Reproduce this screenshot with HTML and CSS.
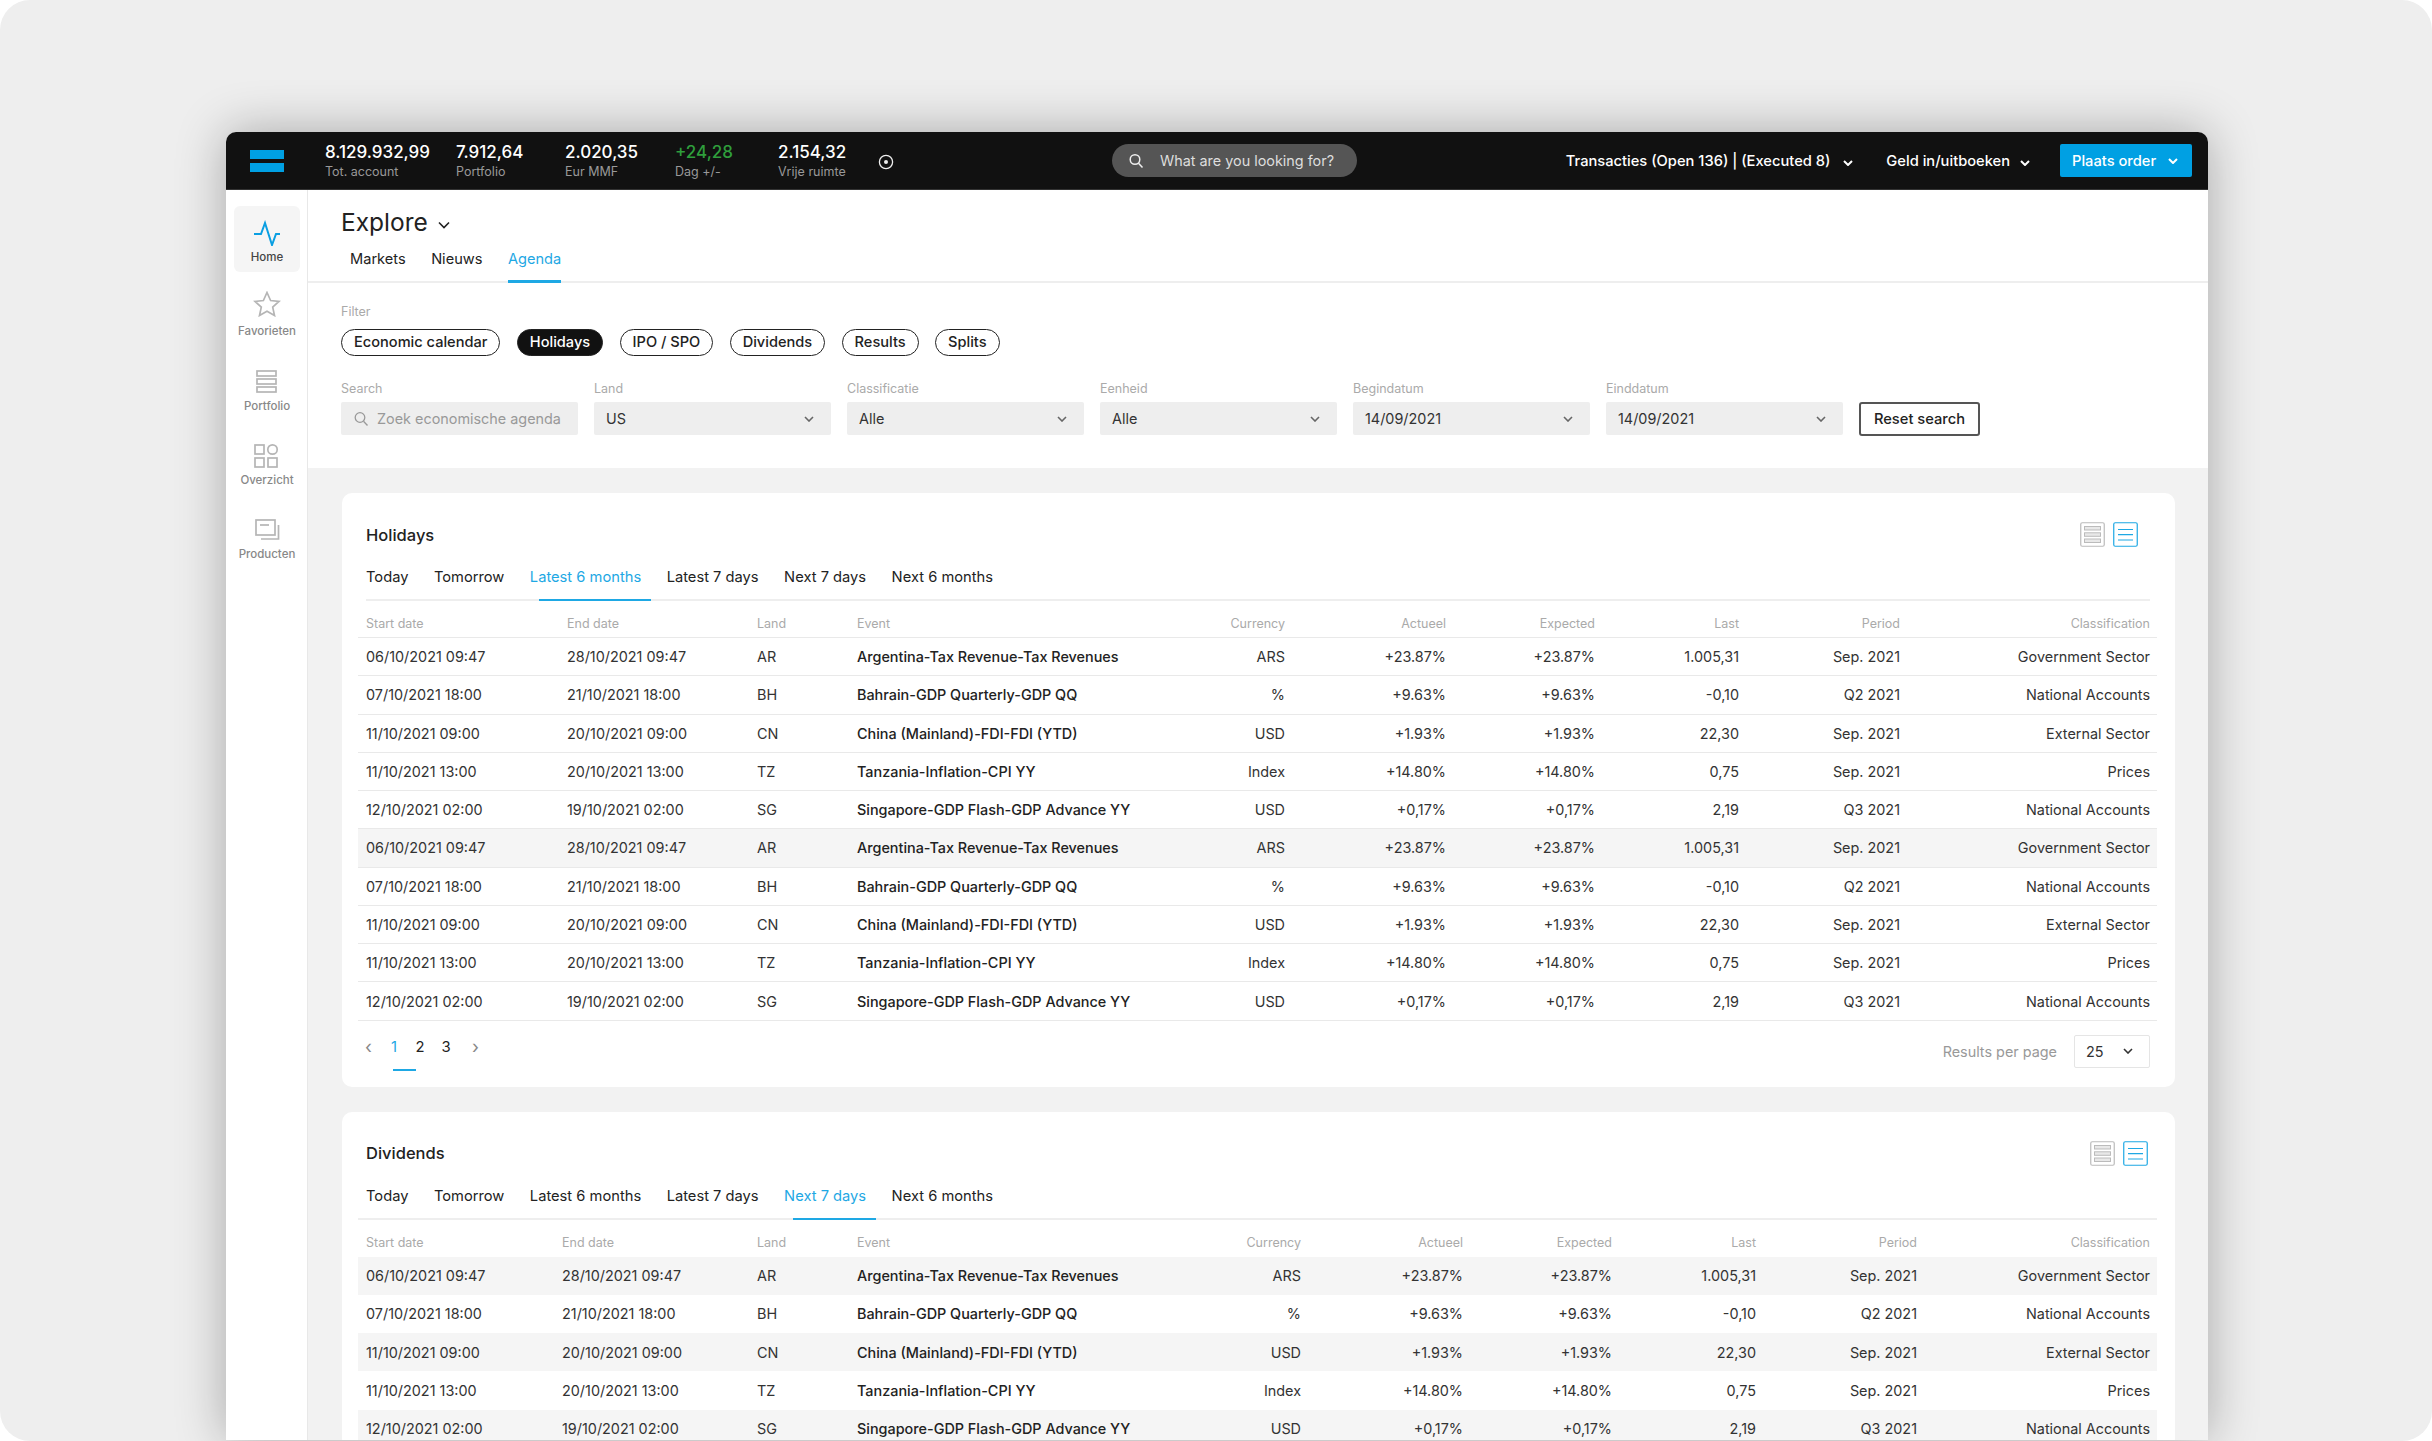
FILE: index.html
```html
<!DOCTYPE html>
<html lang="nl">

<head>
    <meta charset="utf-8">
    <title>Explore | Agenda</title>
    <link rel="stylesheet" href="styles.css">
</head>

<body>
    <div class="stage">
        <div class="window">
            <header class="topbar">
                <div class="logo"><span></span><span></span></div>
                <div class="stats">
                    <div class="stat stat-total"><b>8.129.932,99</b><small>Tot. account</small></div>
                    <div class="stat stat-portfolio"><b>7.912,64</b><small>Portfolio</small></div>
                    <div class="stat stat-mmf"><b>2.020,35</b><small>Eur MMF</small></div>
                    <div class="stat stat-day"><b class="green">+24,28</b><small>Dag +/-</small></div>
                    <div class="stat stat-free"><b>2.154,32</b><small>Vrije ruimte</small></div>
                    <svg class="eye" width="16" height="16" viewBox="0 0 16 16">
                        <circle cx="8" cy="8" r="6.6" fill="none" stroke="#eee" stroke-width="1.3" />
                        <circle cx="8" cy="8" r="2" fill="#eee" />
                    </svg>
                </div>
                <div class="global-search">
                    <svg width="16" height="16" viewBox="0 0 16 16" fill="none" stroke="#eee" stroke-width="1.5">
                        <circle cx="7" cy="6.5" r="4.8" />
                        <path d="M10.5 10.2 14.5 14.5" />
                    </svg>
                    <span>What are you looking for?</span>
                </div>
                <div class="top-actions">
                    <a class="top-link link-transactions">Transacties (Open 136) | (Executed 8) <svg class="chev" width="10" height="6" viewBox="0 0 10 6"><path d="M1 1l4 4 4-4" /></svg></a>
                    <a class="top-link link-funds">Geld in/uitboeken <svg class="chev" width="10" height="6" viewBox="0 0 10 6"><path d="M1 1l4 4 4-4" /></svg></a>
                    <a class="order-btn">Plaats order <svg class="chev" width="10" height="6" viewBox="0 0 10 6"><path d="M1 1l4 4 4-4" /></svg></a>
                </div>
            </header>

            <div class="app">
                <nav class="sidebar">
                    <a class="side-item active">
                        <svg width="28" height="26" viewBox="0 0 28 26" fill="none" stroke="#0a9fe2" stroke-width="2">
                            <path d="M1 14h7l4-11 7 22 4-11h4" />
                        </svg>
                        Home
                    </a>
                    <a class="side-item">
                        <svg class="icon-star" width="28" height="26" viewBox="0 0 28 26" fill="none" stroke="#b5b5b5" stroke-width="1.7">
                            <path d="M14 1.500l3.600 8 8.400.9-6.300 5.700 1.800 8.400-7.500-4.300-7.500 4.300 1.800-8.400-6.300-5.700 8.400-.9z" />
                        </svg>
                        Favorieten
                    </a>
                    <a class="side-item">
                        <svg width="28" height="26" viewBox="0 0 28 26" fill="none" stroke="#b5b5b5" stroke-width="1.7">
                            <rect x="4" y="2" width="19" height="5" />
                            <rect x="4" y="10" width="19" height="5" />
                            <rect x="4" y="18" width="19" height="5" />
                        </svg>
                        Portfolio
                    </a>
                    <a class="side-item">
                        <svg width="28" height="26" viewBox="0 0 28 26" fill="none" stroke="#b5b5b5" stroke-width="1.7">
                            <rect x="2" y="2" width="9" height="9" />
                            <circle cx="19.500" cy="6.500" r="4.700" />
                            <rect x="2" y="15" width="9" height="9" />
                            <rect x="15" y="15" width="9" height="9" />
                        </svg>
                        Overzicht
                    </a>
                    <a class="side-item">
                        <svg class="icon-products" width="28" height="26" viewBox="0 0 28 26" fill="none" stroke="#b5b5b5" stroke-width="1.7">
                            <rect x="3" y="2" width="19" height="15" />
                            <path d="M7 7h9" />
                            <path d="M25.500 7v14H8" />
                        </svg>
                        Producten
                    </a>
                </nav>

                <main class="content">
                    <section class="page-head">
                        <h1>Explore <svg width="12" height="8" viewBox="0 0 12 8" fill="none" stroke="#222" stroke-width="1.600"><path d="M1 1.500l5 5 5-5" /></svg></h1>
                        <div class="page-tabs">
                            <a>Markets</a>
                            <a>Nieuws</a>
                            <a class="active">Agenda</a>
                        </div>
                    </section>

                    <section class="filters">
                        <div class="field-label">Filter</div>
                        <div class="pills">
                            <a class="pill">Economic calendar</a>
                            <a class="pill active">Holidays</a>
                            <a class="pill">IPO / SPO</a>
                            <a class="pill">Dividends</a>
                            <a class="pill">Results</a>
                            <a class="pill">Splits</a>
                        </div>
                        <div class="fields">
                            <div class="field">
                                <div class="field-label">Search</div>
                                <div class="control control-search">
                                    <svg width="16" height="16" viewBox="0 0 16 16" fill="none" stroke="#999" stroke-width="1.300">
                                        <circle cx="7" cy="6.500" r="4.800" />
                                        <path d="M10.500 10.200 14.500 14.500" />
                                    </svg>
                                    Zoek economische agenda
                                </div>
                            </div>
                            <div class="field">
                                <div class="field-label">Land</div>
                                <div class="control">US <svg class="chev" width="10" height="6" viewBox="0 0 10 6"><path d="M1 1l4 4 4-4" /></svg></div>
                            </div>
                            <div class="field">
                                <div class="field-label">Classificatie</div>
                                <div class="control">Alle <svg class="chev" width="10" height="6" viewBox="0 0 10 6"><path d="M1 1l4 4 4-4" /></svg></div>
                            </div>
                            <div class="field">
                                <div class="field-label">Eenheid</div>
                                <div class="control">Alle <svg class="chev" width="10" height="6" viewBox="0 0 10 6"><path d="M1 1l4 4 4-4" /></svg></div>
                            </div>
                            <div class="field">
                                <div class="field-label">Begindatum</div>
                                <div class="control">14/09/2021 <svg class="chev" width="10" height="6" viewBox="0 0 10 6"><path d="M1 1l4 4 4-4" /></svg></div>
                            </div>
                            <div class="field">
                                <div class="field-label">Einddatum</div>
                                <div class="control">14/09/2021 <svg class="chev" width="10" height="6" viewBox="0 0 10 6"><path d="M1 1l4 4 4-4" /></svg></div>
                            </div>
                            <a class="reset-btn">Reset search</a>
                        </div>
                    </section>

                    <section class="cards">
                        <article class="card card-holidays">
                            <div class="card-head">
                                <h2>Holidays</h2>
                                <div class="view-toggle">
                                    <svg width="25" height="25" viewBox="0 0 25 25" fill="none" stroke="#bbb">
                                        <rect x=".75" y=".75" width="23.500" height="23.500" rx="1.500" stroke-width="1.200" />
                                        <rect x="4.500" y="4.500" width="16" height="3.500" fill="#e8e8e8" />
                                        <rect x="4.500" y="10.800" width="16" height="3.500" fill="#e8e8e8" />
                                        <rect x="4.500" y="17" width="16" height="3.500" fill="#e8e8e8" />
                                    </svg>
                                    <svg width="25" height="25" viewBox="0 0 25 25" fill="none" stroke="#1ea8e4">
                                        <rect x=".75" y=".75" width="23.500" height="23.500" rx="1.500" stroke-width="1.200" />
                                        <path d="M5 7.500h15M5 12.700h15M5 18h15" stroke-width="1.200" />
                                    </svg>
                                </div>
                            </div>
                            <div class="range-tabs">
                                <a>Today</a>
                                <a>Tomorrow</a>
                                <a class="active">Latest 6 months</a>
                                <a>Latest 7 days</a>
                                <a>Next 7 days</a>
                                <a>Next 6 months</a>
                            </div>
                            <div class="grid-table">
                                <div class="row row-head">
                                    <span>Start date</span><span>End date</span><span>Land</span><span>Event</span><span class="num">Currency</span><span class="num">Actueel</span><span class="num">Expected</span><span class="num">Last</span><span class="num">Period</span><span class="num">Classification</span>
                                </div>
                                <div class="row">
                                    <span>06/10/2021 09:47</span><span>28/10/2021 09:47</span><span>AR</span><span class="event">Argentina-Tax Revenue-Tax Revenues</span><span class="num">ARS</span><span class="num">+23.87%</span><span class="num">+23.87%</span><span class="num">1.005,31</span><span class="num">Sep. 2021</span><span class="num">Government Sector</span>
                                </div>
                                <div class="row">
                                    <span>07/10/2021 18:00</span><span>21/10/2021 18:00</span><span>BH</span><span class="event">Bahrain-GDP Quarterly-GDP QQ</span><span class="num">%</span><span class="num">+9.63%</span><span class="num">+9.63%</span><span class="num">-0,10</span><span class="num">Q2 2021</span><span class="num">National Accounts</span>
                                </div>
                                <div class="row">
                                    <span>11/10/2021 09:00</span><span>20/10/2021 09:00</span><span>CN</span><span class="event">China (Mainland)-FDI-FDI (YTD)</span><span class="num">USD</span><span class="num">+1.93%</span><span class="num">+1.93%</span><span class="num">22,30</span><span class="num">Sep. 2021</span><span class="num">External Sector</span>
                                </div>
                                <div class="row">
                                    <span>11/10/2021 13:00</span><span>20/10/2021 13:00</span><span>TZ</span><span class="event">Tanzania-Inflation-CPI YY</span><span class="num">Index</span><span class="num">+14.80%</span><span class="num">+14.80%</span><span class="num">0,75</span><span class="num">Sep. 2021</span><span class="num">Prices</span>
                                </div>
                                <div class="row">
                                    <span>12/10/2021 02:00</span><span>19/10/2021 02:00</span><span>SG</span><span class="event">Singapore-GDP Flash-GDP Advance YY</span><span class="num">USD</span><span class="num">+0,17%</span><span class="num">+0,17%</span><span class="num">2,19</span><span class="num">Q3 2021</span><span class="num">National Accounts</span>
                                </div>
                                <div class="row hover">
                                    <span>06/10/2021 09:47</span><span>28/10/2021 09:47</span><span>AR</span><span class="event">Argentina-Tax Revenue-Tax Revenues</span><span class="num">ARS</span><span class="num">+23.87%</span><span class="num">+23.87%</span><span class="num">1.005,31</span><span class="num">Sep. 2021</span><span class="num">Government Sector</span>
                                </div>
                                <div class="row">
                                    <span>07/10/2021 18:00</span><span>21/10/2021 18:00</span><span>BH</span><span class="event">Bahrain-GDP Quarterly-GDP QQ</span><span class="num">%</span><span class="num">+9.63%</span><span class="num">+9.63%</span><span class="num">-0,10</span><span class="num">Q2 2021</span><span class="num">National Accounts</span>
                                </div>
                                <div class="row">
                                    <span>11/10/2021 09:00</span><span>20/10/2021 09:00</span><span>CN</span><span class="event">China (Mainland)-FDI-FDI (YTD)</span><span class="num">USD</span><span class="num">+1.93%</span><span class="num">+1.93%</span><span class="num">22,30</span><span class="num">Sep. 2021</span><span class="num">External Sector</span>
                                </div>
                                <div class="row">
                                    <span>11/10/2021 13:00</span><span>20/10/2021 13:00</span><span>TZ</span><span class="event">Tanzania-Inflation-CPI YY</span><span class="num">Index</span><span class="num">+14.80%</span><span class="num">+14.80%</span><span class="num">0,75</span><span class="num">Sep. 2021</span><span class="num">Prices</span>
                                </div>
                                <div class="row">
                                    <span>12/10/2021 02:00</span><span>19/10/2021 02:00</span><span>SG</span><span class="event">Singapore-GDP Flash-GDP Advance YY</span><span class="num">USD</span><span class="num">+0,17%</span><span class="num">+0,17%</span><span class="num">2,19</span><span class="num">Q3 2021</span><span class="num">National Accounts</span>
                                </div>
                            </div>
                            <div class="card-foot">
                                <div class="pager">
                                    <a class="pager-arrow">&#8249;</a>
                                    <a class="active">1</a>
                                    <a>2</a>
                                    <a>3</a>
                                    <a class="pager-arrow pager-next">&#8250;</a>
                                </div>
                                <div class="per-page">
                                    Results per page
                                    <div class="per-select">25 <svg class="chev" width="10" height="6" viewBox="0 0 10 6"><path d="M1 1l4 4 4-4" /></svg></div>
                                </div>
                            </div>
                        </article>

                        <article class="card card-dividends">
                            <div class="card-head">
                                <h2>Dividends</h2>
                                <div class="view-toggle">
                                    <svg width="25" height="25" viewBox="0 0 25 25" fill="none" stroke="#bbb">
                                        <rect x=".75" y=".75" width="23.500" height="23.500" rx="1.500" stroke-width="1.200" />
                                        <rect x="4.500" y="4.500" width="16" height="3.500" fill="#e8e8e8" />
                                        <rect x="4.500" y="10.800" width="16" height="3.500" fill="#e8e8e8" />
                                        <rect x="4.500" y="17" width="16" height="3.500" fill="#e8e8e8" />
                                    </svg>
                                    <svg width="25" height="25" viewBox="0 0 25 25" fill="none" stroke="#1ea8e4">
                                        <rect x=".75" y=".75" width="23.500" height="23.500" rx="1.500" stroke-width="1.200" />
                                        <path d="M5 7.500h15M5 12.700h15M5 18h15" stroke-width="1.200" />
                                    </svg>
                                </div>
                            </div>
                            <div class="range-tabs">
                                <a>Today</a>
                                <a>Tomorrow</a>
                                <a>Latest 6 months</a>
                                <a>Latest 7 days</a>
                                <a class="active">Next 7 days</a>
                                <a>Next 6 months</a>
                            </div>
                            <div class="grid-table">
                                <div class="row row-head">
                                    <span>Start date</span><span>End date</span><span>Land</span><span>Event</span><span class="num">Currency</span><span class="num">Actueel</span><span class="num">Expected</span><span class="num">Last</span><span class="num">Period</span><span class="num">Classification</span>
                                </div>
                                <div class="row">
                                    <span>06/10/2021 09:47</span><span>28/10/2021 09:47</span><span>AR</span><span class="event">Argentina-Tax Revenue-Tax Revenues</span><span class="num">ARS</span><span class="num">+23.87%</span><span class="num">+23.87%</span><span class="num">1.005,31</span><span class="num">Sep. 2021</span><span class="num">Government Sector</span>
                                </div>
                                <div class="row">
                                    <span>07/10/2021 18:00</span><span>21/10/2021 18:00</span><span>BH</span><span class="event">Bahrain-GDP Quarterly-GDP QQ</span><span class="num">%</span><span class="num">+9.63%</span><span class="num">+9.63%</span><span class="num">-0,10</span><span class="num">Q2 2021</span><span class="num">National Accounts</span>
                                </div>
                                <div class="row">
                                    <span>11/10/2021 09:00</span><span>20/10/2021 09:00</span><span>CN</span><span class="event">China (Mainland)-FDI-FDI (YTD)</span><span class="num">USD</span><span class="num">+1.93%</span><span class="num">+1.93%</span><span class="num">22,30</span><span class="num">Sep. 2021</span><span class="num">External Sector</span>
                                </div>
                                <div class="row">
                                    <span>11/10/2021 13:00</span><span>20/10/2021 13:00</span><span>TZ</span><span class="event">Tanzania-Inflation-CPI YY</span><span class="num">Index</span><span class="num">+14.80%</span><span class="num">+14.80%</span><span class="num">0,75</span><span class="num">Sep. 2021</span><span class="num">Prices</span>
                                </div>
                                <div class="row">
                                    <span>12/10/2021 02:00</span><span>19/10/2021 02:00</span><span>SG</span><span class="event">Singapore-GDP Flash-GDP Advance YY</span><span class="num">USD</span><span class="num">+0,17%</span><span class="num">+0,17%</span><span class="num">2,19</span><span class="num">Q3 2021</span><span class="num">National Accounts</span>
                                </div>
                            </div>
                        </article>
                    </section>
                </main>
            </div>
        </div>
    </div>
</body>
</html>
```

FILE: styles.css
```css
html,
body {
    padding: 0;
    margin: 0;
    background-color: #fff;
}

* {
    box-sizing: border-box;
}

body {
    font-family: Inter, "Liberation Sans", sans-serif;
    font-size: 14.4px;
    color: #222;
}

.stage {
    height: 1441px;
    padding: 132px 0 0 226px;
    background-color: #eee;
    border-radius: 30px;
    overflow: hidden;
}

.window {
    width: 1982px;
    height: 1308px;
    border-radius: 10px 10px 0 0;
    overflow: hidden;
    background-color: #fff;
    box-shadow: 0 0 50px rgba(0, 0, 0, .3);
}

.chev {
    fill: none;
    stroke: currentColor;
    stroke-width: 1.6;
}

/* top bar */
.topbar {
    height: 58px;
    display: flex;
    align-items: center;
    padding: 0 16px 0 24px;
    border-bottom: 1px solid #333;
    background-color: #111;
    color: #fff;
}

.topbar .chev {
    stroke-width: 2;
}

.logo {
    width: 34px;
}

.logo span {
    display: block;
    height: 9px;
    background-color: #00a0e3;
}

.logo span + span {
    margin-top: 4px;
}

.stats {
    display: flex;
    align-items: center;
    margin-left: 41px;
}

.stat b {
    display: block;
    font-size: 17px;
    line-height: 20px;
    font-weight: 500;
}

.stat small {
    display: block;
    font-size: 12.5px;
    line-height: 15px;
    color: #999;
    margin-top: 2px;
}

.stat .green {
    color: #2f9e3c;
}

.stat-total { width: 131px; }
.stat-portfolio { width: 109px; }
.stat-mmf { width: 110px; }
.stat-day { width: 103px; }
.stat-free { width: 100px; }

.eye {
    margin-top: 2px;
}

.global-search {
    width: 245px;
    height: 33px;
    margin-left: 218px;
    display: flex;
    align-items: center;
    gap: 16px;
    padding-left: 16px;
    border-radius: 17px;
    background-color: #555;
    color: #ddd;
}

.top-actions {
    margin-left: auto;
    display: flex;
    align-items: center;
    font-size: 14.7px;
    font-weight: 500;
}

.top-link {
    white-space: nowrap;
}

.link-transactions {
    margin-right: 33px;
}

.link-transactions .chev {
    margin-left: 9px;
}

.link-funds {
    margin-right: 30px;
}

.link-funds .chev {
    margin-left: 6px;
}

.order-btn {
    width: 132px;
    height: 33px;
    display: flex;
    align-items: center;
    justify-content: space-between;
    padding: 0 14px 0 12px;
    border-radius: 2px;
    background-color: #00a0e3;
}

/* side navigation */
.app {
    display: flex;
    height: 1250px;
}

.sidebar {
    flex: none;
    width: 82px;
    padding: 16px 7px 0 8px;
    border-right: 1px solid #e8e8e8;
}

.side-item {
    height: 66px;
    margin-bottom: 8.25px;
    display: flex;
    flex-direction: column;
    align-items: center;
    gap: 4px;
    padding-top: 14px;
    border-radius: 6px;
    font-size: 11.5px;
    line-height: 14px;
    font-weight: 500;
    color: #888;
}

.side-item.active {
    background-color: #f5f5f5;
    color: #444;
}

.icon-star {
    margin: -3px 0 3px;
}

.icon-products {
    margin: 1px 0 -1px;
}

/* page header */
.content {
    flex: 1;
    background-color: #f2f2f2;
}

.page-head {
    padding-top: 17px;
    background-color: #fff;
    border-bottom: 2px solid #eee;
}

.page-head h1 {
    margin: 0 0 0 33px;
    font-size: 24.5px;
    line-height: 30px;
    font-weight: 400;
}

.page-head h1 svg {
    margin-left: 3px;
    vertical-align: 2px;
}

.page-tabs {
    display: flex;
    gap: 25.5px;
    margin: 9px 0 -2px 42px;
    font-size: 14.6px;
}

.page-tabs a {
    height: 37px;
    padding-top: 3px;
    line-height: 20px;
}

.page-tabs a.active {
    color: #1ea8e4;
    border-bottom: 3px solid #1ea8e4;
}

/* filters */
.filters {
    padding: 21px 0 33px 33px;
    background-color: #fff;
}

.field-label {
    font-size: 12.5px;
    line-height: 16px;
    color: #aaa;
}

.pills {
    display: flex;
    gap: 16.4px;
    margin: 9px 0 25px;
}

.pill {
    height: 27px;
    padding: 0 12px;
    border: 1.5px solid #222;
    border-radius: 14px;
    font-size: 14.6px;
    line-height: 24px;
    font-weight: 500;
}

.pill.active {
    background-color: #111;
    color: #fff;
}

.fields {
    display: flex;
    align-items: flex-end;
    gap: 16px;
}

.field {
    width: 237px;
}

.control {
    height: 33px;
    margin-top: 5px;
    display: flex;
    align-items: center;
    justify-content: space-between;
    padding: 0 17px 0 12px;
    border-radius: 2px;
    background-color: #eee;
    color: #333;
}

.control .chev {
    color: #666;
}

.control-search {
    justify-content: flex-start;
    gap: 8px;
    padding-right: 0;
    white-space: nowrap;
    color: #999;
}

.reset-btn {
    width: 121px;
    height: 34px;
    margin-bottom: -1px;
    border: 2px solid #555;
    border-radius: 3px;
    font-size: 14.7px;
    font-weight: 500;
    line-height: 30px;
    text-align: center;
}

/* cards */
.cards {
    display: flex;
    flex-direction: column;
    gap: 25px;
    padding: 25px 33px 0 34px;
}

.card {
    padding: 0 18px 0 16px;
    border-radius: 10px;
    background-color: #fff;
}

.card-holidays {
    height: 594px;
}

.card-head {
    display: flex;
    justify-content: space-between;
    align-items: center;
    padding: 29px 19px 0 8px;
}

.card-head h2 {
    margin: 0;
    font-size: 16.5px;
    font-weight: 500;
}

.view-toggle {
    display: flex;
    gap: 8px;
}

.view-toggle svg {
    display: block;
}

.range-tabs {
    display: flex;
    gap: 25.5px;
    height: 54px;
    margin: 0 7px 0 8px;
    padding-top: 20px;
    border-bottom: 2px solid #eee;
    font-size: 14.7px;
}

.range-tabs a {
    position: relative;
    line-height: 20px;
}

.range-tabs a.active {
    color: #1ea8e4;
}

.range-tabs a.active::after {
    content: "";
    position: absolute;
    left: 9px;
    right: -10px;
    top: 32px;
    height: 2px;
    background-color: #1ea8e4;
}

.row {
    display: grid;
    align-items: center;
    height: 38.27px;
    padding: 0 7px 0 8px;
    border-bottom: 1.5px solid #e9e9e9;
    color: #333;
}

.card-holidays .row {
    grid-template-columns: 201px 190px 100px 328px 100px 161px 149px 144px 161px 250px;
}

.card-dividends .row {
    grid-template-columns: 196px 195px 100px 344px 100px 162px 149px 144px 161px 233px;
}

.row-head {
    height: 37px;
    padding-top: 9px;
    font-size: 12.5px;
    color: #aaa;
}

.row .num {
    text-align: right;
}

.row .event {
    color: #222;
    font-weight: 500;
}

.row.hover {
    background-color: #f5f5f5;
}

.card-dividends .card-head {
    padding: 28.5px 9px 0 8px;
}

.card-dividends .range-tabs {
    margin: 0;
    padding-left: 8px;
}

.card-dividends .row {
    border-bottom: 0;
}

.card-dividends .row:nth-child(even) {
    background-color: #f5f5f5;
}

/* pagination */
.card-foot {
    display: flex;
    justify-content: space-between;
    padding: 14px 7px 0 0;
}

.pager {
    display: flex;
    margin-left: -2px;
    font-size: 14.8px;
    line-height: 24px;
}

.pager a {
    position: relative;
    width: 26px;
    text-align: center;
}

.pager a.active {
    color: #1ea8e4;
}

.pager a.active::after {
    content: "";
    position: absolute;
    left: 12px;
    top: 34px;
    width: 23px;
    height: 2px;
    background-color: #1ea8e4;
}

.pager .pager-arrow {
    width: 25px;
    color: #888;
    font-size: 18px;
}

.pager .pager-next {
    margin-left: 4px;
}

.per-page {
    display: flex;
    align-items: center;
    gap: 17px;
    color: #999;
}

.per-select {
    width: 76px;
    height: 33px;
    display: flex;
    align-items: center;
    justify-content: space-between;
    padding: 0 16px 0 11px;
    border: 1px solid #e5e5e5;
    border-radius: 2px;
    color: #333;
}
```
